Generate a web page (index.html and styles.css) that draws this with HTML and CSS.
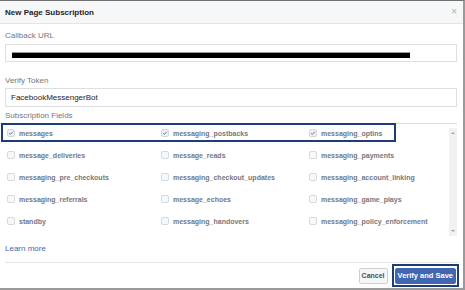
FILE: index.html
```html
<!DOCTYPE html>
<html>
<head>
<meta charset="utf-8">
<link rel="stylesheet" href="styles.css">
</head>
<body>
<div class="dialog">
  <div class="header">
    <span class="title">New Page Subscription</span>
    <span class="close">×</span>
  </div>
  <div class="body">
    <div class="label">Callback URL</div>
    <div class="input url"><span class="redact"></span></div>
    <div class="label gap-top">Verify Token</div>
    <div class="input token">FacebookMessengerBot</div>
    <div class="label small-top">Subscription Fields</div>
    <div class="fields">
      <div class="grid">
        <div class="item"><span class="box checked"><svg viewBox="0 0 8 8"><path d="M1.5 4.2 L3.2 5.8 L6.6 2.2" fill="none" stroke="#4b4f56" stroke-width="1"/></svg></span>messages</div>
        <div class="item"><span class="box checked"><svg viewBox="0 0 8 8"><path d="M1.5 4.2 L3.2 5.8 L6.6 2.2" fill="none" stroke="#4b4f56" stroke-width="1"/></svg></span>messaging_postbacks</div>
        <div class="item"><span class="box checked"><svg viewBox="0 0 8 8"><path d="M1.5 4.2 L3.2 5.8 L6.6 2.2" fill="none" stroke="#4b4f56" stroke-width="1"/></svg></span>messaging_optins</div>
        <div class="item"><span class="box"></span>message_deliveries</div>
        <div class="item"><span class="box"></span>message_reads</div>
        <div class="item"><span class="box"></span>messaging_payments</div>
        <div class="item"><span class="box"></span>messaging_pre_checkouts</div>
        <div class="item"><span class="box"></span>messaging_checkout_updates</div>
        <div class="item"><span class="box"></span>messaging_account_linking</div>
        <div class="item"><span class="box"></span>messaging_referrals</div>
        <div class="item"><span class="box"></span>message_echoes</div>
        <div class="item"><span class="box"></span>messaging_game_plays</div>
        <div class="item"><span class="box"></span>standby</div>
        <div class="item"><span class="box"></span>messaging_handovers</div>
        <div class="item"><span class="box"></span>messaging_policy_enforcement</div>
      </div>
      <div class="scrollbar">
        <span class="arrow up"></span>
        <span class="arrow down"></span>
      </div>
      <div class="highlight"></div>
    </div>
    <a class="learn">Learn more</a>
  </div>
  <div class="footer">
    <button class="btn cancel">Cancel</button>
    <span class="primary-wrap"><button class="btn primary">Verify and Save</button></span>
  </div>
</div>
</body>
</html>
```

FILE: styles.css
```css
html, body {
  margin: 0;
  padding: 0;
  background: #ffffff;
}
body {
  font-family: "Liberation Sans", Arial, sans-serif;
  width: 465px;
  height: 290px;
  overflow: hidden;
}
.dialog {
  box-sizing: border-box;
  width: 465px;
  height: 290px;
  border-top: 1px solid #6f6f6f;
  border-right: 2px solid #9a9a9a;
  border-bottom: 2px solid #9a9a9a;
  background: #fff;
  display: flex;
  flex-direction: column;
}
.header {
  height: 22px;
  background: #f6f7f9;
  border-bottom: 1px solid #e5e5e5;
  display: flex;
  align-items: center;
  justify-content: space-between;
  padding: 0 6px 0 5px;
}
.title {
  font-weight: bold;
  font-size: 8px;
  color: #1d2129;
}
.close {
  font-size: 10px;
  color: #b0b3b8;
  line-height: 10px;
}
.body {
  padding: 7px 6px 0 5px;
  display: flex;
  flex-direction: column;
}
.label {
  font-size: 8px;
  line-height: 10px;
  color: #72767d;
  height: 10px;
}
.gap-top { margin-top: 14px; }
.small-top { margin-top: 4px; }
.input {
  box-sizing: border-box;
  margin-top: 3px;
  height: 18px;
  border: 1px solid #dddfe2;
  display: flex;
  align-items: center;
  padding-left: 6px;
}
.token {
  margin-top: 2px;
  height: 19px;
  font-size: 8px;
  color: #1d2129;
  padding-left: 5px;
}
.redact {
  display: block;
  width: 398px;
  height: 5px;
  margin-top: 4px;
  background: #000;
  box-shadow: 0 -1px 0 #9a9a9a;
}
.fields {
  position: relative;
  margin: 2px 0 0 -5px;
  height: 112px;
  border-top: 1px solid #dcdcdc;
}
.grid {
  display: grid;
  grid-template-columns: 154px 148px 1fr;
  grid-auto-rows: 18px;
  row-gap: 4px;
  padding-left: 7px;
}
.item {
  display: flex;
  align-items: center;
  font-size: 7px;
  font-weight: bold;
  color: #74787f;
  white-space: nowrap;
}
.box {
  box-sizing: border-box;
  width: 8px;
  height: 8px;
  border: 1px solid #d6d9dd;
  border-radius: 2px;
  background: #f7f8fa;
  margin-right: 4px;
  display: flex;
  flex: none;
}
.box.checked {
  background: #eef0f6;
  border-color: #d3d7de;
}
.box svg {
  width: 6px;
  height: 6px;
}
.scrollbar {
  position: absolute;
  right: 0;
  top: 4px;
  width: 8px;
  height: 108px;
  background: #f1f1f1;
}
.arrow {
  position: absolute;
  left: 2px;
  width: 0;
  height: 0;
  border-left: 2px solid transparent;
  border-right: 2px solid transparent;
}
.arrow.up {
  top: 4px;
  border-bottom: 2px solid #a3a3a3;
}
.arrow.down {
  bottom: 4px;
  border-top: 2px solid #a3a3a3;
}
.highlight {
  position: absolute;
  left: 1px;
  top: -1px;
  width: 395px;
  box-sizing: border-box;
  height: 19px;
  border: 2px solid #1d3d78;
}
.learn {
  margin-top: 8px;
  font-size: 8px;
  line-height: 10px;
  color: #4267b2;
}
.footer {
  margin: 8px 4px 0 5px;
  border-top: 1px solid #e5e5e5;
  display: flex;
  justify-content: flex-end;
  align-items: center;
  gap: 7px;
  padding: 5px 3px 0 0;
}
.btn {
  font-family: "Liberation Sans", Arial, sans-serif;
  font-weight: bold;
  font-size: 7px;
  height: 16px;
  border-radius: 2px;
  padding: 0 4px;
  margin: 0;
  line-height: 14px;
  white-space: nowrap;
}
.cancel {
  background: #f5f6f7;
  border: 1px solid #ccd0d5;
  color: #4b4f56;
  padding: 0 2px;
}
.primary-wrap {
  position: relative;
  display: flex;
}
.primary-wrap::after {
  content: "";
  position: absolute;
  left: -3px;
  top: -4px;
  right: -3px;
  bottom: -3px;
  border: 2px solid #1d3d78;
}
.primary {
  background: #4267b2;
  border: 1px solid #4267b2;
  color: #fff;
  padding: 0 2px;
  font-size: 7.5px;
}
```
